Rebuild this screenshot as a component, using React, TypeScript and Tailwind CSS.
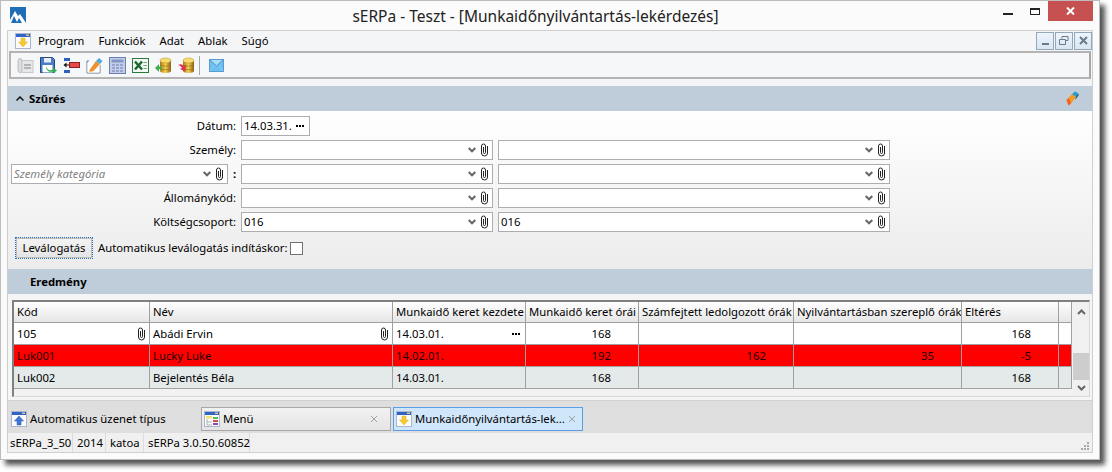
const FONT = "font-['Noto_Sans','Open_Sans',sans-serif]";

function Clip() {
    return (
        <svg width="9" height="14" viewBox="0 0 9 14" className="shrink-0" fill="none" stroke="#222" strokeWidth="1">
            <path d="M7.500 3v7a3 3 0 0 1-6 0V3a2 2 0 0 1 4 0v6.500a1 1 0 0 1-2 0V4" />
        </svg>
    );
}

function Chevron() {
    return (
        <svg width="8" height="6" viewBox="0 0 8 6" className="shrink-0" fill="none" stroke="#666" strokeWidth="2">
            <path d="M0.700 1L4 4.300 7.300 1" />
        </svg>
    );
}

function Dots() {
    return (
        <span className="flex gap-px shrink-0">
            <span className="w-0.5 h-0.5 bg-black" />
            <span className="w-0.5 h-0.5 bg-black" />
            <span className="w-0.5 h-0.5 bg-black" />
        </span>
    );
}

function WinIcon({ kind }: { kind: "down" | "up" | "menu" }) {
    return (
        <svg width="16" height="16" viewBox="0 0 16 16" className="shrink-0">
            <rect x="0.500" y="0.500" width="15" height="15" fill="#fbfbfb" stroke="#a9b6cc" />
            <rect x="1" y="1" width="14" height="3" fill="#2f63c8" />
            <rect x="11" y="1.500" width="3" height="1.500" fill="#e8c27a" />
            {kind === "down" && <path d="M6 5h4v4h2.500L8 14 3.500 9H6z" fill="#f5c930" stroke="#e0b030" strokeWidth="0.500" />}
            {kind === "up" && <path d="M8 5l4.500 5H10v4H6v-4H3.500z" fill="#3f76d8" stroke="#2a55a8" strokeWidth="0.500" />}
            {kind === "menu" && (
                <>
                    <rect x="2" y="5" width="6" height="2.500" fill="#f4e06a" />
                    <rect x="9" y="6" width="5" height="2" fill="#58b858" />
                    <rect x="9" y="9" width="5" height="2" fill="#d84a4a" />
                    <rect x="9" y="12" width="5" height="2" fill="#8a4ab8" />
                    <path d="M3 8v6h5M3 11h5" stroke="#999" fill="none" strokeWidth="0.700" />
                </>
            )}
        </svg>
    );
}

function Coins({ color, d }: { color: string; d: string }) {
    return (
        <svg width="17" height="17" viewBox="0 0 17 17">
            <defs>
                <linearGradient id="coin" x1="0" x2="1" y1="0" y2="0">
                    <stop offset="0" stopColor="#a87818" />
                    <stop offset="0.500" stopColor="#f4d050" />
                    <stop offset="1" stopColor="#8a5c10" />
                </linearGradient>
            </defs>
            <path d="M5 3.500h11v10.500c0 2.500-11 2.500-11 0z" fill="url(#coin)" />
            <ellipse cx="10.500" cy="3.500" rx="5.500" ry="2.500" fill="#f6dc70" stroke="#b08820" strokeWidth="0.500" />
            <path d="M5 8c2 1.500 9 1.500 11 0M5 11.500c2 1.500 9 1.500 11 0" stroke="#9a7018" strokeWidth="0.700" fill="none" />
            <path d={d} fill={color} />
        </svg>
    );
}

function Eraser() {
    return (
        <svg width="13" height="15" viewBox="0 0 13 15">
            <path d="M0.500 9L6 3l4 3-5 6.500-2.500 2z" fill="#f59a20" />
            <path d="M0.500 9L2.500 14.500l2.500-2L3 7z" fill="#f2602a" />
            <path d="M6 3l3-2.500 3.500 2L10 6z" fill="#2a9ac8" />
            <path d="M10 6l2.500-3.500V4.500L9 9z" fill="#1a4a68" />
        </svg>
    );
}

function Toolbar() {
    return (
        <div className="h-[28px] mx-px mt-px border-2 border-[#b4b4b4] border-r-[#a8a8a8] bg-[#f6f7f9] flex items-center pl-[6px] gap-1.5 shrink-0">
            <svg width="17" height="17" viewBox="0 0 17 17" className="opacity-60">
                <rect x="1" y="1.500" width="4" height="14" rx="2" fill="#ccc" stroke="#999" />
                <rect x="5" y="3.500" width="11" height="12" fill="#ddd" stroke="#aaa" />
                <path d="M7 8h7M7 11h7" stroke="#888" strokeWidth="2" />
            </svg>
            <svg width="17" height="17" viewBox="0 0 17 17">
                <path d="M0.500 0.500h12l2 2v13h-14z" fill="#4a7cc8" stroke="#24497f" />
                <rect x="4" y="1" width="7" height="4.500" fill="#e8eef8" />
                <rect x="2.500" y="8" width="10" height="7.500" fill="#fff" />
                <path d="M6 9c1 4 4 5 7 3.500V10.500l4 3-4 3v-2c-4 1-7-1-7-5.500z" fill="#30b050" />
            </svg>
            <svg width="17" height="17" viewBox="0 0 17 17">
                <rect x="1" y="1" width="6" height="3" fill="#2c5fc0" />
                <rect x="1" y="13" width="6" height="3" fill="#2c5fc0" />
                <rect x="6.500" y="5.500" width="10" height="5" fill="#e84848" stroke="#902020" />
                <path d="M0.500 8l3-2.500v2h2.500v1H3.500v2z" fill="#111" />
            </svg>
            <svg width="17" height="17" viewBox="0 0 17 17">
                <path d="M3 4h-2v12h13V8" fill="#fff" stroke="#6a7a90" />
                <rect x="1.500" y="6" width="12" height="9.500" fill="#fff" />
                <path d="M3.500 13l6.500-9 4 3-6.500 7-4 1z" fill="#f09030" />
                <path d="M10 4l3-3 3.500 3-2.500 3z" fill="#50a8d8" />
            </svg>
            <svg width="17" height="17" viewBox="0 0 17 17">
                <rect x="0.500" y="0.500" width="16" height="16" fill="#c4cee6" stroke="#6a80b0" />
                <rect x="2.500" y="2.500" width="12" height="3" fill="#8496c8" />
                <path d="M3 8h3M7 8h3M11 8h3M3 11h3M7 11h3M11 11h3M3 14h3M7 14h3M11 14h3" stroke="#8898c8" strokeWidth="1.500" />
            </svg>
            <svg width="17" height="17" viewBox="0 0 17 17">
                <rect x="0.500" y="1.500" width="16" height="14" fill="#f4f8f4" stroke="#2a7a40" />
                <path d="M3 4.500l7 8M10 4.500l-7 8" stroke="#1a6a30" strokeWidth="2.500" />
                <path d="M11.500 5.500h3.500M11.500 8.500h3.500M11.500 11.500h3.500" stroke="#70a880" />
            </svg>
            <Coins color="#3cb050" d="M0 11l4-4v2.500c2 0 3 1 3.500 3.500-1-1-2-1-3.500-1v3z" />
            <Coins color="#e03050" d="M0 8c3-1.500 5-0.500 5.500 1.500L8 8l-1 6.500-5-2.500 2-1c-0.500-1.500-2-2.500-4-3z" />
            <span className="w-px h-[19px] bg-[#a8a8a8] ml-[-2px] mr-[3px]" />
            <svg width="15" height="13" viewBox="0 0 15 13">
                <rect x="0.500" y="0.500" width="14" height="12" fill="#6cc0f0" stroke="#5a9ad0" />
                <path d="M1 1l6.500 6L14 1" fill="#a8dcf8" stroke="#4a90c8" />
                <path d="M1 12l4-6M14 12l-4-6" stroke="#8accf0" />
            </svg>
        </div>
    );
}

function MdiButton({ children }: { children: React.ReactNode }) {
    return (
        <span className="w-[18px] h-[18px] border border-[#93a7b8] bg-gradient-to-b from-[#eef4fb] to-[#d8e6f4] flex items-center justify-center">
            {children}
        </span>
    );
}

function Lookup({ value, width, italic }: { value?: string; width: string; italic?: boolean }) {
    return (
        <div className={`${width} h-5 border border-[#abadb3] bg-white flex items-center pl-0.5 pr-[3px] gap-[4px] shrink-0`}>
            <span className={italic ? "grow italic text-[#808080]" : "grow"}>{value}</span>
            <Chevron />
            <Clip />
        </div>
    );
}

function LookupRow({ label, value }: { label: string; value?: string }) {
    return (
        <div className="flex items-center h-5">
            <span className="w-[228px] text-right shrink-0">{label}</span>
            <span className="w-[5px]" />
            <Lookup width="w-[252px]" value={value} />
            <span className="w-[5px]" />
            <Lookup width="w-[392px]" value={value} />
        </div>
    );
}

const COLS = "grid grid-cols-[136px_243px_133px_113px_155px_168px_97px_13px]";

type Row = {
    kod: string;
    nev: string;
    kezd: string;
    keret: string;
    szamf: string;
    nyilv: string;
    elt: string;
    rowClass: string;
    tools?: boolean;
};

const ROWS: Row[] = [
    { kod: "105", nev: "Abádi Ervin", kezd: "14.03.01.", keret: "168", szamf: "", nyilv: "", elt: "168", rowClass: "bg-white", tools: true },
    { kod: "Luk001", nev: "Lucky Luke", kezd: "14.02.01.", keret: "192", szamf: "162", nyilv: "35", elt: "-5", rowClass: "bg-[#ff0000] text-[#1e0000]" },
    { kod: "Luk002", nev: "Bejelentés Béla", kezd: "14.03.01.", keret: "168", szamf: "", nyilv: "", elt: "168", rowClass: "bg-[#e4e9e9]" },
];

const HEADERS = ["Kód", "Név", "Munkaidő keret kezdete", "Munkaidő keret órái", "Számfejtett ledolgozott órák", "Nyilvántartásban szereplő órák", "Eltérés", ""];

const CELL = "border-r border-b border-[#a0a0a0] flex items-center px-[3px] whitespace-nowrap overflow-hidden";

function Grid() {
    return (
        <div className="ml-1 mr-0.5 mt-1.5 h-[97px] border-t-2 border-l-2 border-[#808080] border-r border-r-[#d8d8d8] border-b border-b-[#d8d8d8] flex bg-[#f2f2f2] shrink-0">
            <div className="w-[1058px] shrink-0">
                <div className={COLS}>
                    {HEADERS.map((h, i) => (
                        <div key={i} className={`${CELL} h-[21px] bg-gradient-to-b from-white to-[#e6e6e6]`}>{h}</div>
                    ))}
                </div>
                {ROWS.map((r) => (
                    <div key={r.kod} className={`${COLS} ${r.rowClass}`}>
                        <div className={`${CELL} h-[22px] justify-between`}>{r.kod}{r.tools && <Clip />}</div>
                        <div className={`${CELL} h-[22px] justify-between`}>{r.nev}{r.tools && <Clip />}</div>
                        <div className={`${CELL} h-[22px] justify-between`}>{r.kezd}{r.tools && <span className="mr-[2px]"><Dots /></span>}</div>
                        <div className={`${CELL} h-[22px] justify-end pr-[27px]`}>{r.keret}</div>
                        <div className={`${CELL} h-[22px] justify-end pr-[27px]`}>{r.szamf}</div>
                        <div className={`${CELL} h-[22px] justify-end pr-[27px]`}>{r.nyilv}</div>
                        <div className={`${CELL} h-[22px] justify-end pr-[27px]`}>{r.elt}</div>
                        <div className={`${CELL} h-[22px]`} />
                    </div>
                ))}
            </div>
            <div className="grow ml-px bg-[#f0f0f0] flex flex-col items-center">
                <svg width="9" height="6" viewBox="0 0 9 6" className="mt-[7px]" fill="none" stroke="#666" strokeWidth="2">
                    <path d="M1 5l3.500-3.500L8 5" />
                </svg>
                <div className="w-full h-[27px] bg-[#cdcdcd] mt-[38px]" />
                <svg width="9" height="6" viewBox="0 0 9 6" className="mt-[5px]" fill="none" stroke="#666" strokeWidth="2">
                    <path d="M1 1l3.500 3.500L8 1" />
                </svg>
            </div>
        </div>
    );
}

function TabClose() {
    return (
        <svg width="8" height="8" viewBox="0 0 8 8" stroke="#a0a0a0" className="shrink-0">
            <path d="M1 1l6 6M7 1L1 7" />
        </svg>
    );
}

export default function App() {
    return (
        <div className={`${FONT} w-[1112px] h-[472px] bg-white text-[11.3px] leading-none text-black overflow-hidden`}>
            <div className="w-[1100px] h-[460px] border border-[#bcbcbc] bg-[#fbfbfb] shadow-[5px_5px_5px_#555] flex flex-col">
                {/* title bar */}
                <div className="h-[29px] flex shrink-0">
                    <svg width="16" height="16" viewBox="0 0 16 16" className="ml-[9px] mt-[6px] shrink-0">
                        <rect width="16" height="16" fill="#1f6fb8" />
                        <path d="M0 13l5-9 3 5 2-2 6 9H12L9 11l-2 4-3-6-3 7H0z" fill="#fff" />
                    </svg>
                    <span className="grow text-center text-[15.500px] leading-[30px] text-[#222] pl-[42px]">sERPa - Teszt - [Munkaidőnyilvántartás-lekérdezés]</span>
                    <span className="w-2.5 h-0.5 bg-[#222] mt-[12px] mr-[17px]" />
                    <span className="w-2.5 h-[7px] border border-[#222] border-t-2 mt-[7px] mr-2" />
                    <span className="w-[45px] h-5 bg-[#c75050] text-white mr-1.5 flex items-center justify-center">
                        <svg width="9" height="8" viewBox="0 0 9 8" stroke="#fff" strokeWidth="2">
                            <path d="M1 0.500l7 7M8 0.500l-7 7" />
                        </svg>
                    </span>
                </div>

                {/* MDI client */}
                <div className="mx-1.5 h-[423px] border border-[#cfcfcf] bg-[#f4f5f7] flex flex-col">
                    {/* menu bar */}
                    <div className="h-[19px] flex items-center pl-[7px] shrink-0">
                        <WinIcon kind="down" />
                        <span className="ml-[7px]">Program</span>
                        <span className="ml-[14px]">Funkciók</span>
                        <span className="ml-[14px]">Adat</span>
                        <span className="ml-[14px]">Ablak</span>
                        <span className="ml-[14px]">Súgó</span>
                        <span className="ml-auto flex gap-px">
                            <MdiButton><span className="w-[7px] h-0.5 bg-[#6b7b8a] mt-1.5" /></MdiButton>
                            <MdiButton>
                                <svg width="10" height="9" viewBox="0 0 10 9" fill="none" stroke="#6b7b8a">
                                    <path d="M3 2.500V0.500h6v4H7M0.500 3.500h6v5h-6z" />
                                </svg>
                            </MdiButton>
                            <MdiButton>
                                <svg width="9" height="9" viewBox="0 0 9 9" stroke="#6b7b8a" strokeWidth="2">
                                    <path d="M1 1l7 7M8 1l-7 7" />
                                </svg>
                            </MdiButton>
                        </span>
                    </div>

                    <Toolbar />

                    {/* filter */}
                    <div className="h-[25px] mt-[7px] bg-[#bfccda] flex items-center font-bold shrink-0 pl-[8px] pr-[13px]">
                        <svg width="8" height="5" viewBox="0 0 8 5" fill="none" stroke="#111" strokeWidth="1.500" className="mr-[5px]">
                            <path d="M0.500 4.500L4 1l3.500 3.500" />
                        </svg>
                        <span>Szűrés</span>
                        <span className="ml-auto"><Eraser /></span>
                    </div>
                    <div className="h-[158px] bg-gradient-to-b from-white to-[#ececec] pt-[5px] flex flex-col gap-1 shrink-0">
                        <div className="flex items-center h-5">
                            <span className="w-[228px] text-right shrink-0">Dátum:</span>
                            <span className="w-[5px]" />
                            <div className="w-[69px] h-5 border border-[#abadb3] bg-white flex items-center justify-between pl-0.5 pr-[5px]">
                                14.03.31.
                                <Dots />
                            </div>
                        </div>
                        <LookupRow label="Személy:" />
                        <div className="flex items-center h-5 pl-[3px]">
                            <Lookup width="w-[217px]" value="Személy kategória" italic />
                            <span className="w-[13px] text-center font-bold">:</span>
                            <Lookup width="w-[252px]" />
                            <span className="w-[5px]" />
                            <Lookup width="w-[392px]" />
                        </div>
                        <LookupRow label="Állománykód:" />
                        <LookupRow label="Költségcsoport:" value="016" />
                        <div className="flex items-center h-[22px] mt-[1px] pl-[7px]">
                            <button className="w-[78px] h-[22px] border border-dotted border-[#2a6fc0] bg-gradient-to-b from-[#f4f4f4] to-[#e4e4e4] outline outline-1 -outline-offset-2 outline-[#bbb]">Leválogatás</button>
                            <span className="ml-[5px]">Automatikus leválogatás indításkor:</span>
                            <span className="w-[13px] h-[13px] border border-[#707070] bg-white ml-[3px]" />
                        </div>
                    </div>

                    {/* results */}
                    <div className="h-[25px] bg-[#bfccda] flex items-center font-bold pl-[22px] shrink-0">Eredmény</div>
                    <Grid />

                    {/* tabs */}
                    <div className="mt-[3px] h-[33px] bg-[#dedede] border-t border-[#d0d0d0] flex items-end pb-[2px] pl-[3px] shrink-0">
                        <span className="flex items-center gap-[3px] w-[190px] h-6">
                            <WinIcon kind="up" />
                            Automatikus üzenet típus
                        </span>
                        <span className="h-6 w-[190px] border border-[#a8a8a8] bg-gradient-to-b from-[#f2f2f2] to-[#e4e4e4] flex items-center pl-[2px] pr-3 gap-[3px]">
                            <WinIcon kind="menu" />
                            <span className="grow">Menü</span>
                            <TabClose />
                        </span>
                        <span className="h-6 w-[190px] ml-0.5 border border-[#5a9ee8] bg-[#d0e6fb] flex items-center pl-0.5 pr-2 gap-[3px]">
                            <WinIcon kind="down" />
                            <span className="grow whitespace-nowrap">Munkaidőnyilvántartás-lek...</span>
                            <TabClose />
                        </span>
                    </div>

                    {/* status bar */}
                    <div className="bg-[#f0f0f0] flex items-center grow whitespace-nowrap">
                        <span className="w-[65px] h-full flex items-center pl-[2px] border-r border-[#dcdcdc]">sERPa_3_50</span>
                        <span className="w-[33px] h-full flex items-center pl-1 border-r border-[#dcdcdc]">2014</span>
                        <span className="w-[38px] h-full flex items-center pl-1 border-r border-[#dcdcdc]">katoa</span>
                        <span className="w-[106px] h-full flex items-center pl-1 border-r border-[#dcdcdc]">sERPa 3.0.50.60852</span>
                        <svg width="9" height="9" viewBox="0 0 9 9" className="ml-auto mr-0.5 mt-2" fill="#a8a8a8">
                            <rect x="6" y="0" width="2" height="2" />
                            <rect x="3" y="3" width="2" height="2" />
                            <rect x="6" y="3" width="2" height="2" />
                            <rect x="0" y="6" width="2" height="2" />
                            <rect x="3" y="6" width="2" height="2" />
                            <rect x="6" y="6" width="2" height="2" />
                        </svg>
                    </div>
                </div>
            </div>
        </div>
    );
}
